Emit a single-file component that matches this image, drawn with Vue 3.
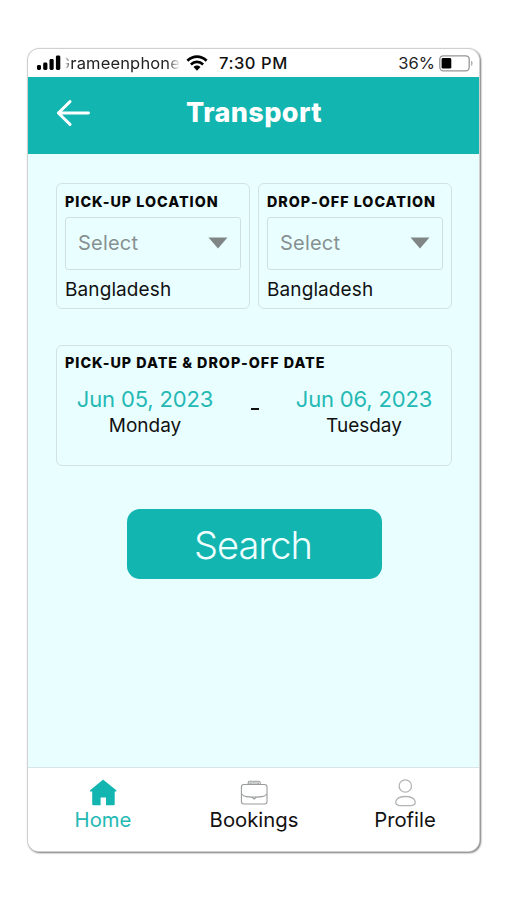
<script setup>
const places = [
  { key: 'pickup', title: 'PICK-UP LOCATION', country: 'Bangladesh' },
  { key: 'dropoff', title: 'DROP-OFF LOCATION', country: 'Bangladesh' },
]
</script>

<template>
  <main class="phone">
    <div class="status">
      <svg class="signal" width="26" height="16" viewBox="0 0 26 16">
        <rect x="1" y="10" width="4" height="5" rx="1.4" />
        <rect x="7.2" y="7.5" width="4.2" height="7.5" rx="1.4" />
        <rect x="13.5" y="4" width="4.2" height="11" rx="1.4" />
        <rect x="19.9" y="0.5" width="4.4" height="14.5" rx="1.4" />
      </svg>
      <span class="carrier"><span class="carrier-name">Grameenphone</span></span>
      <svg class="wifi" width="22" height="16" viewBox="0 0 22 16" fill="none" stroke="#000" stroke-width="2.7">
        <path d="M1.4 5.7C7 .2 15 .2 20.6 5.7" />
        <path d="M4.9 9.4c3.6-3.4 8.6-3.4 12.2 0" />
        <path d="M7.5 12a5 5 0 0 1 7 0L11 15.7z" fill="#000" stroke="none" />
      </svg>
      <span class="time">7:30 PM</span>
      <span class="percent">36%</span>
      <svg class="battery" width="34" height="17" viewBox="0 0 34 17">
        <rect x="0.8" y="0.8" width="29.4" height="15" rx="3.5" fill="#fff" stroke="#969696" stroke-width="1.3" />
        <rect x="2.6" y="3" width="9.7" height="10.6" rx="1.4" />
        <path d="M32.6 6.2q1.2 2.1 0 4.2z" fill="#999" stroke="#999" stroke-width=".6" />
      </svg>
    </div>

    <header class="header">
      <svg class="back" width="34" height="26" viewBox="0 0 34 26" fill="none" stroke="#fff" stroke-width="2.9" stroke-linecap="round" stroke-linejoin="round">
        <path d="M32.5 13H2.5M14 1.6L2.4 13L14 24.4" />
      </svg>
      <h1 class="title">Transport</h1>
    </header>

    <section class="content">
      <div class="places">
        <div v-for="p in places" :key="p.key" class="card place">
          <h2 class="label">{{ p.title }}</h2>
          <div class="select">
            <span class="placeholder">Select</span>
            <svg width="20" height="12" viewBox="0 0 20 12"><path d="M.5.5h19L10 11.5z" fill="#808585" /></svg>
          </div>
          <p class="country">{{ p.country }}</p>
        </div>
      </div>

      <div class="card dates">
        <h2 class="label">PICK-UP DATE &amp; DROP-OFF DATE</h2>
        <div class="range-row">
          <div class="day">
            <span class="date">Jun 05, 2023</span>
            <span class="weekday">Monday</span>
          </div>
          <span class="dash"></span>
          <div class="day">
            <span class="date">Jun 06, 2023</span>
            <span class="weekday">Tuesday</span>
          </div>
        </div>
      </div>

      <button class="search">Search</button>
    </section>

    <nav class="tabs">
      <a class="tab active">
        <svg width="28" height="28" viewBox="0 0 28 28">
          <path d="M13.3 1.2q.8-.7 1.6 0L27 11q1.200 1.600-.6 1.600H25.700v12.600q0 1-1 1H17v-7.700h-5.400v7.700H4.200q-1 0-1-1V12.600H2q-1.800 0-.6-1.600z" fill="#12b5b0" />
        </svg>
        <span>Home</span>
      </a>
      <a class="tab">
        <svg width="28" height="28" viewBox="0 0 28 28" fill="none" stroke="#999c9c" stroke-width="1.1">
          <rect x="1.400" y="5.500" width="25.600" height="19.500" rx="2.400" />
          <path d="M8.200 5.500V3.700q0-1.500 1.500-1.500h9q1.500 0 1.500 1.500v1.800M10 5.500V4h8.400v1.500" />
          <path d="M1.700 15q1.500 2.300 4.600 2.600l5.700.5 2.200 2 2.200-2 5.700-.5q3.100-.3 4.600-2.600M12 18h4.400" />
        </svg>
        <span>Bookings</span>
      </a>
      <a class="tab">
        <svg width="28" height="28" viewBox="0 0 28 28" fill="none" stroke="#b4b4b4" stroke-width="1.3">
          <circle cx="14.300" cy="7" r="6.200" />
          <path d="M4.800 22.600C5.500 19.300 9.600 17.500 14.500 17.500s9 1.800 9.700 5.100c.4 2.600-1.500 4-4.700 4h-10c-3.200 0-5.100-1.400-4.700-4z" />
        </svg>
        <span>Profile</span>
      </a>
    </nav>
  </main>
</template>

<style>
body {
  background: #fff;
}
</style>

<style scoped>
* {
  box-sizing: border-box;
}

.phone {
  display: flex;
  flex-direction: column;
  width: 451px;
  height: 802px;
  margin: 49px 0 48px 28px;
  overflow: hidden;
  border-radius: 11px;
  background: #fff;
  box-shadow: 0 0 0 1px #d0d0d0, 1px 1px 2px 1px #777;
  color: #111;
  font-family: Inter, "Liberation Sans", sans-serif;
}

h1,
h2,
p {
  margin: 0;
}

.status {
  display: flex;
  align-items: center;
  height: 28px;
  padding: 0 6px 0 8px;
  font-size: 16.5px;
  flex: none;
}

.carrier {
  display: flex;
  justify-content: flex-end;
  width: 115px;
  margin-left: 3px;
  overflow: hidden;
  mask-image: linear-gradient(90deg, transparent, #000 6px, #000 102px, transparent);
}

.carrier-name {
  color: #222;
  font-size: 16.5px;
  letter-spacing: 0.15px;
}

.wifi {
  margin-left: 6px;
}

.time {
  margin-left: 11px;
  font-weight: 500;
  letter-spacing: 0.55px;
}

.percent {
  margin-left: auto;
  margin-right: 4px;
  color: #222;
}

.header {
  display: grid;
  grid-template-columns: 34px 1fr 34px;
  align-items: center;
  height: 77px;
  padding: 0 27px 6px 28px;
  background: #12b5b0;
  flex: none;
}

.title {
  color: #fff;
  font-size: 27px;
  font-weight: 800;
  line-height: 32px;
  letter-spacing: 0.4px;
  text-align: center;
}

.content {
  display: flex;
  flex-direction: column;
  flex: 1;
  padding: 29px 27px 0 28px;
  background: #e9ffff;
}

.places {
  display: grid;
  grid-template-columns: 1fr 1fr;
  gap: 8px;
}

.card {
  border: 1px solid #d2e2e3;
  border-radius: 6px;
  padding: 0 8px;
}

.place {
  height: 126px;
}

.label {
  margin-top: 8px;
  color: #080808;
  font-size: 14.3px;
  font-weight: 800;
  line-height: 19px;
  letter-spacing: 1px;
  white-space: nowrap;
}

.select {
  display: flex;
  align-items: center;
  justify-content: space-between;
  height: 53px;
  margin-top: 6px;
  padding: 0 12px 1px;
  border: 1px solid #d0e0e2;
  border-radius: 3px;
}

.placeholder {
  color: #879091;
  font-size: 20px;
  letter-spacing: 0.2px;
}

.country {
  margin-top: 8px;
  font-size: 19px;
  line-height: 24px;
  letter-spacing: 0.1px;
}

.dates {
  height: 121px;
  margin-top: 36px;
}

.dates .label {
  margin-top: 7px;
}

.range-row {
  display: flex;
  justify-content: space-between;
  padding: 13px 10px 0 11px;
}

.day {
  display: flex;
  flex-direction: column;
  align-items: center;
  width: 138px;
}

.date {
  color: #24b8b4;
  font-size: 22px;
  line-height: 28px;
  letter-spacing: -0.15px;
  white-space: nowrap;
}

.weekday {
  font-size: 19px;
  line-height: 25px;
}

.dash {
  width: 8px;
  height: 2px;
  margin-top: 23px;
  background: #111;
}

.search {
  align-self: center;
  width: 255px;
  height: 70px;
  margin-top: 43px;
  padding: 2px 2px 0 0;
  border: 0;
  border-radius: 13px;
  background: #12b5b0;
  color: #efffff;
  font: 350 38px Inter, sans-serif;
  letter-spacing: -1px;
}

.tabs {
  display: flex;
  justify-content: space-between;
  height: 84px;
  padding: 11px 24px 0 25px;
  border-top: 1px solid #d8e6e6;
  background: #fff;
  flex: none;
}

.tab {
  display: flex;
  flex-direction: column;
  align-items: center;
  width: 100px;
  font-size: 20.3px;
  line-height: 26px;
}

.active {
  color: #24b8b4;
}
</style>
